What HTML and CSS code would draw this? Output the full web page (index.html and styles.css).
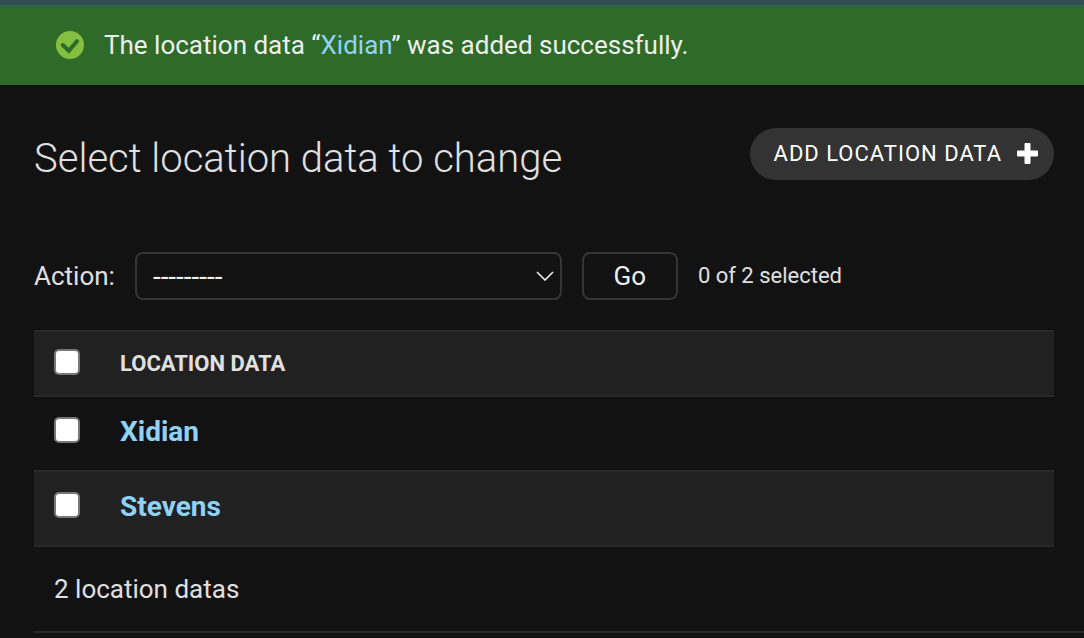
FILE: index.html
```html
<!DOCTYPE html>
<html lang="en">
<head>
<meta charset="utf-8">
<title>Select location data to change</title>
<link rel="stylesheet" href="styles.css">
</head>
<body>
<div class="breadcrumbs"></div>
<ul class="messages">
  <li class="success">
    <svg class="tick" viewBox="0 0 28 28" aria-hidden="true"><circle cx="14" cy="14" r="14" fill="#84bf41"/><path d="M6.800 14l6 5.800L21 10.200" fill="none" stroke="#2c6b28" stroke-width="4" stroke-linecap="round" stroke-linejoin="miter"/></svg>
    <span>The location data “<a href="#">Xidian</a>” was added successfully.</span>
  </li>
</ul>
<main class="content">
  <header class="heading">
    <h1>Select location data to change</h1>
    <a class="add" href="#">Add location data
      <svg class="plus" viewBox="0 0 21 21" aria-hidden="true"><path d="M8.500 0h4q1 0 1 1v6.500H20q1 0 1 1v4q0 1-1 1h-6.500V20q0 1-1 1h-4q-1 0-1-1v-6.500H1q-1 0-1-1v-4q0-1 1-1h6.500V1q0-1 1-1z" fill="#fff"/></svg>
    </a>
  </header>
  <form>
    <div class="actions">
      <label for="action">Action:</label>
      <span class="select">
        <select id="action"><option>---------</option></select>
        <svg class="chevron" viewBox="0 0 18 10" aria-hidden="true"><path d="M1 1l8 8 8-8" fill="none" stroke="#eee" stroke-width="1.600"/></svg>
      </span>
      <button type="button">Go</button>
      <span class="counter">0 of 2 selected</span>
    </div>
    <table>
      <thead><tr><td class="check"><input type="checkbox" aria-label="Select all"></td><th scope="col">Location data</th></tr></thead>
      <tbody>
        <tr><td class="check"><input type="checkbox" aria-label="Select Xidian"></td><th scope="row"><a href="#">Xidian</a></th></tr>
        <tr class="alt"><td class="check"><input type="checkbox" aria-label="Select Stevens"></td><th scope="row"><a href="#">Stevens</a></th></tr>
      </tbody>
    </table>
    <p class="paginator">2 location datas</p>
  </form>
</main>
</body>
</html>
```
FILE: styles.css
```css
* { box-sizing: border-box; }
body { margin: 0; background: #121212; color: #e0e0e0; font-family: Roboto, sans-serif; font-size: 26px; }
a { color: #90d2f9; text-decoration: none; }
.breadcrumbs { height: 5px; background: #304b5e; }
.messages { margin: 0; padding: 0; list-style: none; }
.success { display: flex; align-items: center; gap: 20px; height: 80px; padding: 0 56px; background: #2e6b28; color: #eee; }
.tick { width: 28px; height: 28px; }
.content { padding: 43px 30px 0 34px; }
.heading { display: flex; justify-content: space-between; align-items: flex-start; height: 124px; }
h1 { margin: 0; padding-top: 7px; font-size: 40px; line-height: 48px; font-weight: 300; }
.add { display: flex; align-items: center; gap: 15px; height: 52px; padding: 0 16px 2px 24px; border-radius: 26px; background: #333; color: #fff; font-size: 22px; letter-spacing: 1px; text-transform: uppercase; }
.plus { width: 21px; height: 21px; }
.actions { display: flex; align-items: center; gap: 20px; margin-bottom: 30px; }
.select { position: relative; width: 427px; }
select { display: block; width: 100%; height: 48px; padding: 0 16px; border: 2px solid #353535; border-radius: 8px; appearance: none; background: #121212; color: #eee; font: 28px Roboto, sans-serif; }
.chevron { position: absolute; right: 8px; top: 19px; width: 18px; height: 10px; pointer-events: none; }
button { width: 96px; height: 48px; border: 2px solid #353535; border-radius: 8px; background: #121212; color: #eee; font: 26px Roboto, sans-serif; }
.counter { padding-bottom: 2px; font-size: 22px; }
table { width: 100%; border-collapse: collapse; }
th { padding: 0 0 4px; text-align: left; font-size: 28px; }
thead tr { height: 65px; background: #212121; border-top: 2px solid #282828; border-bottom: 2px solid #282828; }
thead th { padding: 0; font-size: 22px; text-transform: uppercase; }
tbody tr { height: 75px; border-bottom: 2px solid #282828; }
.alt { background: #212121; }
.check { width: 86px; padding: 0 0 8px 20px; }
thead .check { padding-bottom: 4px; }
input { appearance: none; display: block; width: 26px; height: 26px; margin: 0; border: 2px solid #777; border-radius: 5px; background: #fff; }
.paginator { margin: 0 -30px 0 0; padding: 26px 20px; line-height: 32px; border-bottom: 2px solid #282828; }
```
